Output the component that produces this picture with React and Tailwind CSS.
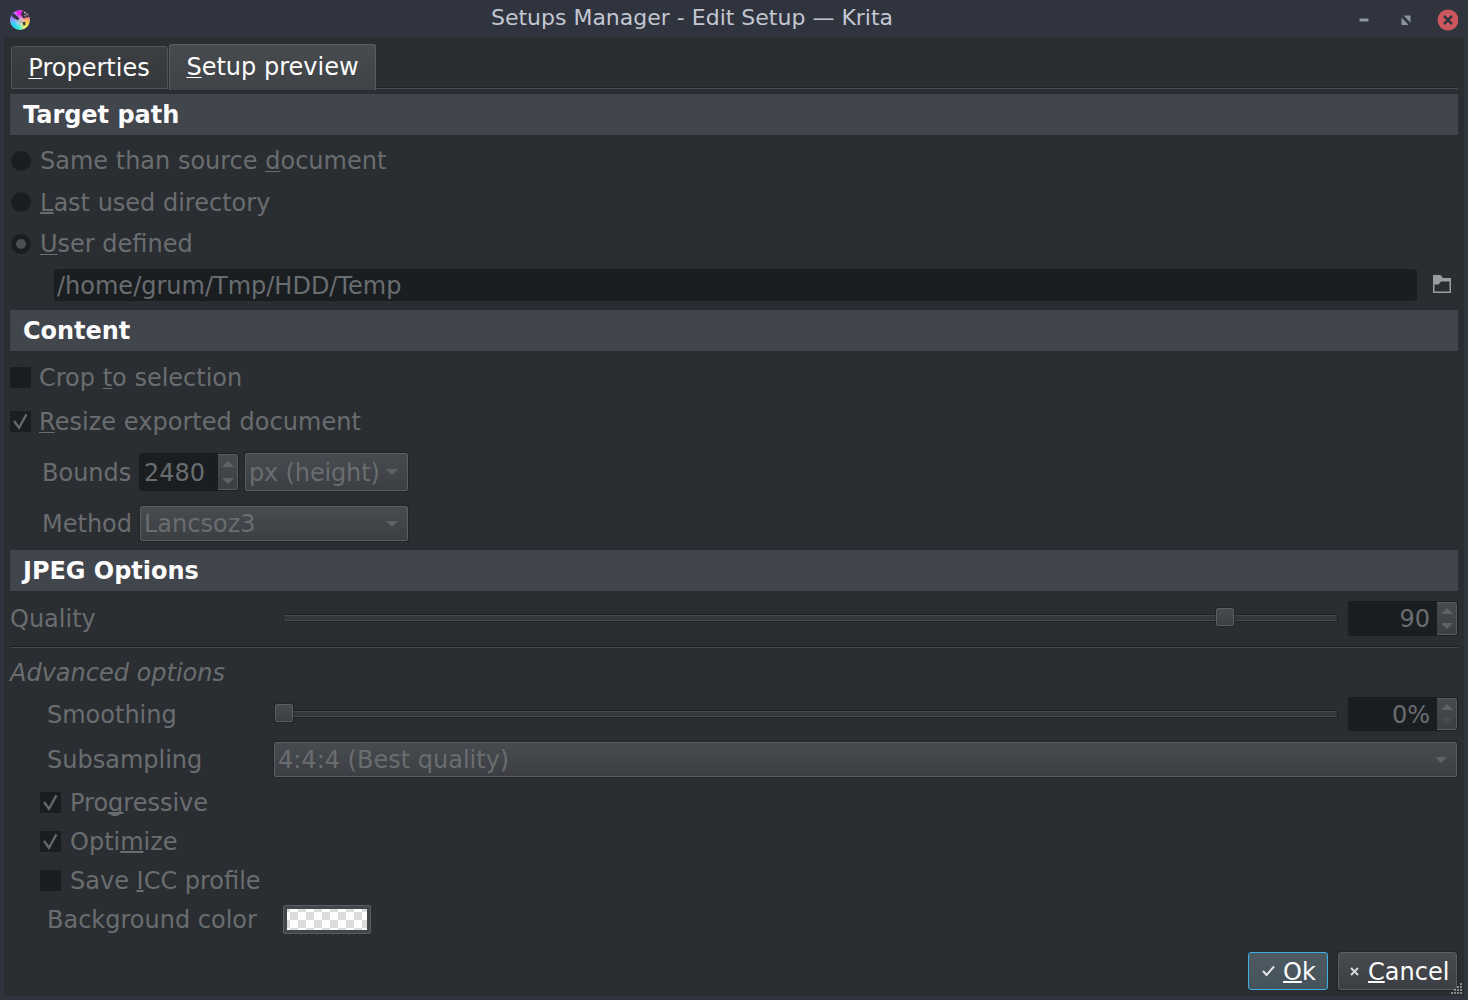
import React from "react";

const U = ({ children, thick }) => (
  <span
    className={
      "underline [text-decoration-skip-ink:none] " +
      (thick ? "decoration-2 underline-offset-[1px]" : "decoration-1 underline-offset-[2px]")
    }
  >
    {children}
  </span>
);

const Section = ({ children, className }) => (
  <h2
    className={
      "flex h-[41px] shrink-0 items-center bg-[#41454c] pl-[13px] font-bold text-[#fcfcfc] text-[24px] tracking-[-0.03px] " + className
    }
  >
    {children}
  </h2>
);

const Radio = ({ checked, className = "" }) => (
  <span className={"ml-[1px] mr-[9px] flex h-5 w-5 items-center justify-center rounded-full bg-[#1b1e20] " + className}>
    {checked && <span className="h-[10px] w-[10px] rounded-full bg-[#4d5052]" />}
  </span>
);

const Check = ({ checked, className }) => (
  <span className={"flex h-[21px] w-[21px] shrink-0 items-center justify-center bg-[#1b1e20] " + className}>
    {checked && (
      <svg width="21" height="21" viewBox="0 0 21 21" fill="none" stroke="#65686a" strokeWidth="2.3">
        <path d="M4 10 L9 16.8 L16.4 3.4" />
      </svg>
    )}
  </span>
);

const Tri = ({ up, dim }) => (
  <svg width="12" height="6" viewBox="0 0 12 6" fill={dim ? "#484b4f" : "#606366"}>
    <path d={up ? "M0 6 L6 0 L12 6Z" : "M0 0 L6 6 L12 0Z"} />
  </svg>
);

const raised =
  "border border-[#5a5d61] bg-linear-to-b from-[#474b4f] to-[#3c3e43] shadow-[0_0_1px_1px_rgba(27,30,32,0.45)]";

const Spin = ({ value, className, align, low }) => (
  <div className={"flex shrink-0 rounded-[3px] bg-[#1b1e20] " + className}>
    <span className={"flex flex-1 items-center " + align}>{value}</span>
    <span
      className={
        "my-px mr-px flex w-5 flex-col items-center justify-between rounded-r-[2px] border border-l-0 border-[#5a5d61] bg-linear-to-b from-[#474b4f] to-[#3c3e43] " +
        (low ? "pt-[5px] pb-[5px]" : "pt-[6px] pb-[5px]")
      }
    >
      <Tri up />
      <Tri dim={value === "0%"} />
    </span>
  </div>
);

const Combo = ({ value, className }) => (
  <div className={"flex items-center justify-between rounded-[2px] pl-[3px] pr-[9px] " + raised + " " + className}>
    <span className="mr-[4px] overflow-hidden pt-px">{value}</span>
    <span className="shrink-0"><Tri /></span>
  </div>
);

const Slider = ({ position, className }) => (
  <div className={"relative h-2 rounded-[2px] border border-[#1f2225] bg-[#33363b] " + className}>
    <span className="block h-px bg-[#45484c]" />
    <span className="mt-[4px] block h-px bg-[#45484c]" />
    <span
      className={"absolute -top-[7px] h-[18px] w-[18px] rounded-[2px] " + raised}
      style={{ left: position }}
    />
  </div>
);

const KritaLogo = () => (
  <svg width="20" height="20" viewBox="0 0 20 20">
    <defs>
      <clipPath id="disc">
        <circle cx="10" cy="10" r="9.8" />
      </clipPath>
      <filter id="soft" x="-20%" y="-20%" width="140%" height="140%">
        <feGaussianBlur stdDeviation="1.6" />
      </filter>
    </defs>
    <g clipPath="url(#disc)">
      <rect width="20" height="20" fill="#b9b4e4" />
      <g filter="url(#soft)">
        <path d="M10 10 L1 -4 H17Z" fill="#f416f0" />
        <path d="M10 10 L17 -3 L24 9Z" fill="#ff5c9a" />
        <path d="M10 10 L24 8 L20 17Z" fill="#ffc040" />
        <path d="M10 10 L20 16 L13 24Z" fill="#e6f25c" />
        <path d="M10 10 L14 24 H2Z" fill="#28f0d0" />
        <path d="M10 10 L3 24 L-4 10Z" fill="#27d3fa" />
        <path d="M10 10 L-4 12 L1 -3Z" fill="#9a7cf8" />
        <circle cx="10" cy="11.5" r="3.4" fill="#c4c8dc" />
      </g>
      <path d="M0.5 3.4 L3 3 L9.4 8.2 L8 10.6 L2.5 7Z" fill="#33303d" />
      <path d="M8.2 9.4 L10.6 9.2 L12.6 11.6 L11 13 L8.4 12Z" fill="#b4b5b7" />
      <path d="M10.8 3 L13.5 0.8 L18.4 3.6 L19 7 L15.4 7.4 L14 8.8 L11.5 6Z" fill="#38333f" />
      <path d="M14.2 2.4 L15.4 3.2 M14.6 5.4 L15.4 6 M16.6 4 L17.4 5" stroke="#f5f5f5" strokeWidth="1.2" />
      <path d="M12.5 12.2 L15.2 11.8 L15.4 14.2 L13.8 16Z" fill="#2b3531" />
    </g>
  </svg>
);

const Grip = () => (
  <svg className="absolute -right-[5px] -bottom-[5px]" width="12" height="12" viewBox="0 0 12 12" fill="#888b8e">
    {[[9, 0], [6, 3], [9, 3], [3, 6], [6, 6], [9, 6], [0, 9], [3, 9], [6, 9], [9, 9]].map(([x, y]) => (
      <rect key={x + "-" + y} x={x} y={y} width="2" height="2" />
    ))}
  </svg>
);

export default function App() {
  return (
    <div className="flex h-[1000px] w-[1468px] flex-col overflow-hidden bg-[#2f343f] font-['DejaVu_Sans',sans-serif] text-[24px] leading-[28px] whitespace-nowrap text-[#6a6d70]">
      <header className="flex h-[37px] shrink-0 justify-between pr-[10px] pl-[10px]">
        <span className="w-[99px] pt-[10px]">
          <KritaLogo />
        </span>
        <span className="mr-[84px] pt-[4px] text-[22px] text-[#c3c7d1]">Setups Manager - Edit Setup — Krita</span>
        <span className="flex w-[99px] items-center pt-[3px]">
          <svg width="99" height="22" viewBox="0 0 99 22">
            <rect x="0.5" y="9.5" width="9" height="3" rx="0.6" fill="#9298a3" />
            <g fill="#8d939e">
              <path d="M43 6.5 H51.5 V15Z" />
              <path d="M42.5 7.5 V16 H51Z" />
            </g>
            <path d="M42 6 L52 16.2" stroke="#2f343f" strokeWidth="3" />
            <circle cx="89" cy="11" r="10.5" fill="#cc575d" />
            <path d="M85.7 7.7 L92.3 14.3 M92.3 7.7 L85.7 14.3" stroke="#2f343f" strokeWidth="2.6" strokeLinecap="round" />
          </svg>
        </span>
      </header>

      <main className="mx-1 mb-1 flex flex-1 flex-col bg-[#2a2d31] px-[6px] pt-[6px]">
        <nav className="flex h-[47px] shrink-0 items-end text-[#fcfcfc]">
          <div className="mb-px ml-px flex h-[43px] w-[157px] justify-center rounded-t-[3px] border border-[#505357] bg-linear-to-b from-[#3b3f42] to-[#35383c] pt-[7px] pr-px">
            <span><U>P</U>roperties</span>
          </div>
          <div className="ml-px flex h-[46px] w-[207px] justify-center rounded-t-[3px] border border-b-0 border-[#5a5d60] bg-linear-to-b from-[#474b4e] to-[#3f4347] pt-[8px]">
            <span><U>S</U>etup preview</span>
          </div>
          <div className="mb-px h-[2px] flex-1 border-t border-b border-t-[#1f2225] border-b-[#4a4d51]" />
        </nav>

        <Section className="mt-1">Target path</Section>
        <label className="mt-[5px] flex h-[42px] shrink-0 items-center">
          <Radio />
          <span>Same than source <U>d</U>ocument</span>
        </label>
        <label className="flex h-[41px] shrink-0 items-center">
          <Radio className="mb-px" />
          <span><U thick>L</U>ast used directory</span>
        </label>
        <label className="flex h-[42px] shrink-0 items-center">
          <Radio checked />
          <span><U>U</U>ser defined</span>
        </label>
        <div className="mt-[4px] flex h-8 shrink-0 items-center pl-[44px]">
          <div className="flex h-8 w-[1363px] items-center rounded-[3px] bg-[#1b1e20] pt-[2px] pl-[3px]">/home/grum/Tmp/HDD/Temp</div>
          <svg className="mb-[2px] ml-[16px]" width="18" height="18" viewBox="0 0 18 18">
            <path d="M0 0 H7.5 L10 3 H18 V18 H0Z M1.5 9.5 V16.5 H16.5 V6.5 H8 L5.5 9.5Z" fill="#9b9c9e" fillRule="evenodd" />
          </svg>
        </div>

        <Section className="mt-[9px]">Content</Section>
        <label className="mt-[5px] flex h-11 shrink-0 items-center">
          <Check className="mr-2 mb-[2px]" />
          <span>Crop <U>t</U>o selection</span>
        </label>
        <label className="flex h-11 shrink-0 items-center">
          <Check checked className="mr-2 mb-[2px]" />
          <span className="tracking-[0.04px]"><U>R</U>esize exported document</span>
        </label>
        <div className="mt-[9px] flex h-[38px] shrink-0 items-center pl-8">
          <span className="w-[97px] pt-[2px]">Bounds</span>
          <Spin value="2480" align="pl-[5px] pt-[2px]" className="h-[38px] w-[100px]" />
          <Combo value="px (height)" className="ml-[6px] h-[38px] w-[163px] tracking-[-0.15px]" />
        </div>
        <div className="mt-[14px] flex h-9 shrink-0 items-center pl-8">
          <span className="w-[98px] pt-[2px]">Method</span>
          <Combo value="Lancsoz3" className="mt-px h-[35px] w-[268px]" />
        </div>

        <Section className="mt-[9px]">JPEG Options</Section>
        <div className="mt-[10px] flex h-[35px] shrink-0 items-center">
          <span className="w-[273px]">Quality</span>
          <Slider position="932px" className="mb-[2px] w-[1055px]" />
          <Spin value="90" align="justify-end pr-[7px]" className="ml-[10px] h-[35px] w-[110px]" low />
        </div>
        <hr className="mt-[10px] h-[2px] shrink-0 border-t border-b border-t-[#1b1e20] border-b-[#45484c]" />
        <div className="mt-[8px] flex h-[34px] shrink-0 items-center italic">Advanced options</div>
        <div className="mt-[7px] flex h-[34px] shrink-0 items-center pl-[37px]">
          <span className="w-[236px] pt-[2px]">Smoothing</span>
          <Slider position="-9px" className="w-[1055px]" />
          <Spin value="0%" align="justify-end pr-[7px] pt-[2px]" className="ml-[10px] h-[34px] w-[110px]" low />
        </div>
        <div className="mt-[10px] flex h-9 shrink-0 items-center pl-[37px]">
          <span className="w-[227px] pt-[2px]">Subsampling</span>
          <Combo value="4:4:4 (Best quality)" className="mt-px mr-px h-[35px] flex-1" />
        </div>
        <div className="mt-[6px] flex flex-col">
          <label className="flex h-[39px] items-center pl-[30px]">
            <Check checked className="mr-[9px]" />
            <span>Pro<U thick>g</U>ressive</span>
          </label>
          <label className="flex h-[39px] items-center pl-[30px]">
            <Check checked className="mr-[9px]" />
            <span>Opti<U thick>m</U>ize</span>
          </label>
          <label className="flex h-[39px] items-center pl-[30px]">
            <Check className="mr-[9px]" />
            <span>Save <U thick>I</U>CC profile</span>
          </label>
          <div className="flex h-[39px] items-center pl-[37px]">
            <span className="w-[236px]">Background color</span>
            <span className="flex h-[29px] w-[88px] items-center justify-center rounded-[2px] border border-[#5a5d61] bg-[#43474b]">
              <span className="h-[21px] w-[80px] bg-[repeating-conic-gradient(#ffffff_0_25%,#dcdcdc_0_50%)] bg-[size:16px_16px] bg-[position:3px_3px]" />
            </span>
          </div>
        </div>

        <footer className="relative mt-auto mb-[6px] flex h-[38px] shrink-0 justify-end pr-px text-[#fcfcfc]">
          <button className="mr-[10px] flex w-20 items-center rounded-[3px] border border-[#3daee9] bg-linear-to-b from-[#4f5b62] to-[#44525a] pl-[13px]">
            <svg className="mr-[8px]" width="13" height="12" viewBox="0 0 13 12" fill="none" stroke="#e4e6e7" strokeWidth="2">
              <path d="M1 6 L4.6 10 L12 1.5" />
            </svg>
            <span className="pt-[2px]"><U thick>O</U>k</span>
          </button>
          <button className={"flex w-[119px] items-center rounded-[3px] pl-[11px] " + raised}>
            <svg className="mr-[9px]" width="9" height="9" viewBox="0 0 9 9" stroke="#d5d6d7" strokeWidth="2">
              <path d="M1 1 L8 8 M8 1 L1 8" />
            </svg>
            <span className="pt-[2px]"><U thick>C</U>ancel</span>
          </button>
          <Grip />
        </footer>
      </main>
    </div>
  );
}
